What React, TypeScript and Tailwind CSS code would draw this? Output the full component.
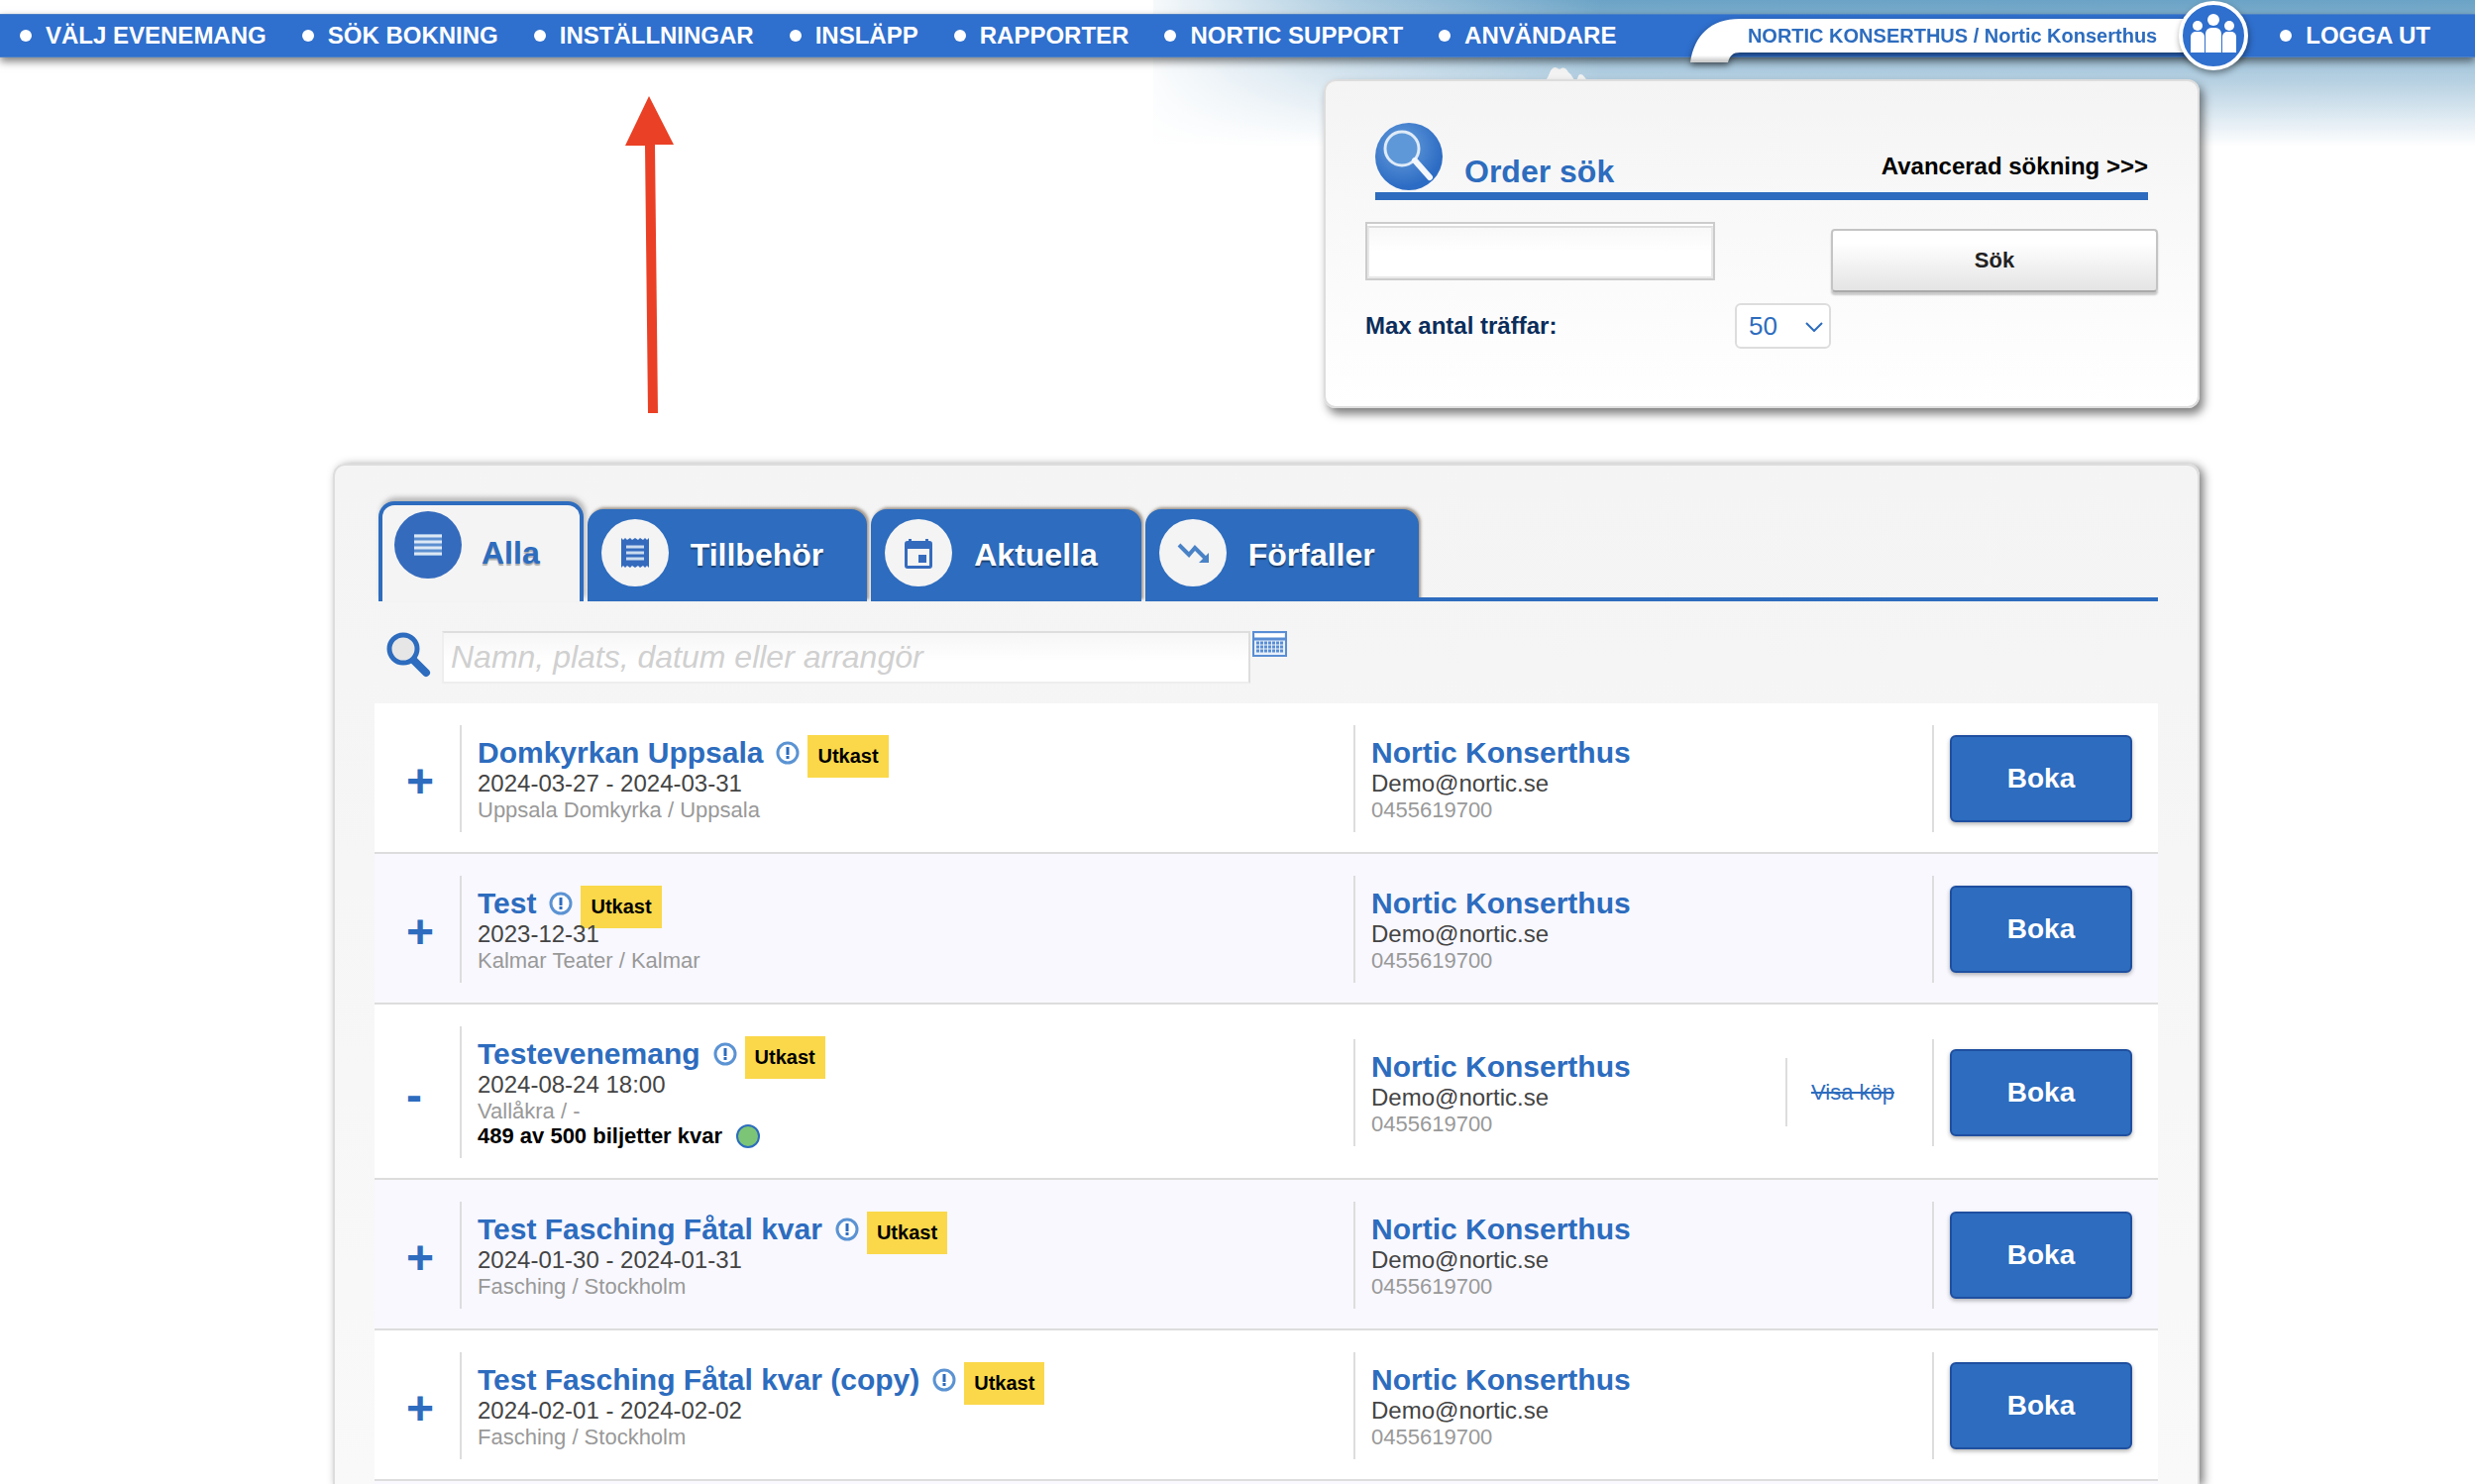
import { useState } from 'react'
import type { ReactNode } from 'react'

const menuItems = [
  'VÄLJ EVENEMANG',
  'SÖK BOKNING',
  'INSTÄLLNINGAR',
  'INSLÄPP',
  'RAPPORTER',
  'NORTIC SUPPORT',
  'ANVÄNDARE'
]

type EventRow = {
  title: string
  date: string
  venue: string
  tickets?: string
}

const events: EventRow[] = [
  { title: 'Domkyrkan Uppsala', date: '2024-03-27 - 2024-03-31', venue: 'Uppsala Domkyrka / Uppsala' },
  { title: 'Test', date: '2023-12-31', venue: 'Kalmar Teater / Kalmar' },
  {
    title: 'Testevenemang',
    date: '2024-08-24 18:00',
    venue: 'Vallåkra / -',
    tickets: '489 av 500 biljetter kvar'
  },
  { title: 'Test Fasching Fåtal kvar', date: '2024-01-30 - 2024-01-31', venue: 'Fasching / Stockholm' },
  { title: 'Test Fasching Fåtal kvar (copy)', date: '2024-02-01 - 2024-02-02', venue: 'Fasching / Stockholm' }
]

const ListIcon = () => (
  <svg viewBox="0 0 68 68" className="size-[68px]">
    <circle cx="34" cy="34" r="34" fill="#356bbd" />
    <rect x="20" y="23" width="28" height="22" fill="#5c8fd0" />
    <path d="M20 25h28M20 31h28M20 37h28M20 43h28" stroke="#dce8f5" strokeWidth="3" />
  </svg>
)

const ReceiptIcon = () => (
  <svg viewBox="0 0 68 68" className="size-[68px]">
    <circle cx="34" cy="34" r="34" fill="#f4f4f4" />
    <path
      d="M20 19l2 2 2-2 2 2 3-2 2 2 3-2 3 2 2-2 3 2 2-2 2 2 2-2v30l-2-2-2 2-2-2-3 2-2-2-3 2-3-2-2 2-3-2-2 2-2-2-2 2z"
      fill="#356bbd"
    />
    <path d="M25 28h18M25 34h18M25 40h18" stroke="#c9dbef" strokeWidth="3" />
  </svg>
)

const CalendarIcon = () => (
  <svg viewBox="0 0 68 68" className="size-[68px]">
    <circle cx="34" cy="34" r="34" fill="#f4f4f4" />
    <path
      d="M24 20h3v2h14v-2h3v2h1a3 3 0 0 1 3 3v22a3 3 0 0 1-3 3H23a3 3 0 0 1-3-3V25a3 3 0 0 1 3-3h1zM23 30v17h22V30z"
      fill="#356bbd"
      fillRule="evenodd"
    />
    <rect x="34" y="36" width="8" height="8" fill="#356bbd" />
  </svg>
)

const TrendIcon = () => (
  <svg viewBox="0 0 68 68" className="size-[68px]">
    <circle cx="34" cy="34" r="34" fill="#f4f4f4" />
    <path d="M20 26l10 10 6-7 10 10" fill="none" stroke="#4a82c6" strokeWidth="4" />
    <path d="M50 34v10H40z" fill="#4a82c6" />
  </svg>
)

const tabs: { label: string; icon: ReactNode }[] = [
  { label: 'Alla', icon: <ListIcon /> },
  { label: 'Tillbehör', icon: <ReceiptIcon /> },
  { label: 'Aktuella', icon: <CalendarIcon /> },
  { label: 'Förfaller', icon: <TrendIcon /> }
]

const MenuLink = ({ label }: { label: string }) => (
  <a href="#" className="flex items-center gap-[14px] text-2xl font-bold whitespace-nowrap text-white">
    <span className="size-3 rounded-full bg-white" />
    {label}
  </a>
)

const Sky = () => (
  <div className="absolute top-0 right-0 left-[1164px] h-[148px] bg-[linear-gradient(to_right,#fffffff0_0%,#ffffff70_15%,#ffffff00_34%),linear-gradient(to_bottom,#6ba3c6_0%,#9fc3da_34%,#b4cfe1_54%,#ffffff_100%)]">
    <svg viewBox="0 0 72 14" className="absolute top-[67px] left-[394px] h-[14px] w-[72px]">
      <path d="M2 14C6 10 6 2 11 1c3 0 4 3 7 1 4-2 6 3 8 5 2 1 3 4 5 7h2c2-2 1-5 4-6 3 0 4 3 7 6z" fill="#f3f3f3" />
    </svg>
  </div>
)

const OrganizationBadge = () => (
  <div className="flex h-11 items-center">
    {/* one shadow for the tail and the label, so no seam shows between them */}
    <div className="-mr-[35px] flex h-11 items-center drop-shadow-[0_3px_3px_rgba(0,0,0,0.5)]">
      <svg viewBox="0 0 50 52" className="h-[52px] w-[50px] self-start">
        <defs>
          <linearGradient id="tail" x1="0" y1="0" x2="0" y2="1">
            <stop offset="0.84" stopColor="#ffffff" />
            <stop offset="0.96" stopColor="#cfcfcf" />
          </linearGradient>
        </defs>
        <path d="M50 5C20 5 4 22 0 49h38c2-7 5-10 12-10z" fill="url(#tail)" />
      </svg>
      <a
        href="#"
        className="flex h-[34px] items-center bg-white pr-[57px] pl-2 text-xl font-bold whitespace-nowrap text-[#2d6cbe]"
      >
        NORTIC KONSERTHUS / Nortic Konserthus
      </a>
    </div>
    <svg viewBox="0 0 70 70" className="relative size-[70px] drop-shadow-[1px_3px_3px_rgba(0,0,0,0.4)]">
      <circle cx="35" cy="35" r="33" fill="#2f6fcd" stroke="#ffffff" strokeWidth="4" />
      <g fill="#ffffff">
        <circle cx="35" cy="19" r="6" />
        <circle cx="19" cy="25" r="5" />
        <circle cx="51" cy="25" r="5" />
        <path d="M27 52V33a6 6 0 0 1 6-6h4a6 6 0 0 1 6 6v19z" />
        <path d="M12 52V36a5 5 0 0 1 5-5h4a5 5 0 0 1 5 5v16z" />
        <path d="M44 52V36a5 5 0 0 1 5-5h4a5 5 0 0 1 5 5v16z" />
      </g>
    </svg>
  </div>
)

const Header = () => (
  <header className="relative pt-[14px]">
    <nav className="flex h-11 items-center gap-9 border-y border-[#4a80c8] bg-[#2f6fcd] pr-[45px] pl-5 shadow-[0_4px_8px_rgba(0,0,0,0.5)]">
      {menuItems.map((item) => (
        <MenuLink key={item} label={item} />
      ))}
      <div className="ml-auto flex items-center gap-8">
        <OrganizationBadge />
        <MenuLink label="LOGGA UT" />
      </div>
    </nav>
  </header>
)

const OrderSearch = () => (
  <form className="h-[332px] w-[884px] rounded-xl border-2 border-[#dddddd] bg-linear-to-b from-[#f4f4f4] to-white px-10 pt-[42px] shadow-[4px_6px_10px_rgba(0,0,0,0.5)]">
    <div className="mx-[10px] flex h-[78px] items-start border-b-8 border-[#2d6cbe]">
      <svg viewBox="0 0 68 68" className="size-[68px]">
        <defs>
          <radialGradient id="lens" cx="0.4" cy="0.35" r="0.6">
            <stop offset="0" stopColor="#69a0dc" />
            <stop offset="1" stopColor="#2d6cc4" />
          </radialGradient>
        </defs>
        <circle cx="34" cy="34" r="34" fill="url(#lens)" />
        <circle cx="27" cy="26" r="17" fill="#5e98d8" stroke="#dfebf8" strokeWidth="3" />
        <path d="M40 38l15 17" stroke="#f4f8fd" strokeWidth="6" strokeLinecap="round" />
      </svg>
      <h2 className="mt-[31px] ml-[22px] text-[32px] leading-9 font-bold text-[#2d6cbe]">Order sök</h2>
      <a href="#" className="mt-[30px] ml-auto text-2xl leading-7 font-bold text-black">
        Avancerad sökning &gt;&gt;&gt;
      </a>
    </div>
    <div className="mt-[22px] flex items-start justify-between">
      <div className="w-[353px] border-2 border-[#cccccc] bg-white pt-[2px]">
        <input
          type="text"
          aria-label="Order sök"
          className="block h-[53px] w-full border-2 border-[#e8e8e8] border-t-[#dddddd] bg-linear-to-b from-[#f8f8f8] to-white to-50% px-2 text-2xl outline-none"
        />
      </div>
      <button
        type="button"
        className="mt-[7px] h-16 w-[330px] rounded-sm border-2 border-[#c4c4c4] border-b-[#aaaaaa] bg-linear-to-b from-white from-20% to-[#e4e4e4] pb-[2px] text-[22px] font-bold text-[#222222] shadow-[0_3px_2px_rgba(0,0,0,0.2)]"
      >
        Sök
      </button>
    </div>
    <div className="mt-[11px] flex h-[46px] items-center">
      <label htmlFor="max-hits" className="w-[373px] text-2xl font-bold text-[#0b2d5b]">
        Max antal träffar:
      </label>
      <div className="relative">
        <select
          id="max-hits"
          className="h-[46px] w-[97px] appearance-none rounded-md border-2 border-[#dddddd] bg-white pl-3 text-[26px] leading-8 text-[#2d6cbe]"
        >
          <option>50</option>
          <option>100</option>
        </select>
        <svg viewBox="0 0 18 10" className="pointer-events-none absolute top-[19px] right-2 h-[10px] w-[18px]">
          <path d="M1 1l8 8 8-8" fill="none" stroke="#2d6cbe" strokeWidth="2" />
        </svg>
      </div>
    </div>
  </form>
)

const Tabs = () => {
  const [active, setActive] = useState('Alla')

  return (
    <div role="tablist" className="flex items-end pl-1">
      {tabs.map((tab) => (
        <button
          key={tab.label}
          type="button"
          role="tab"
          aria-selected={tab.label === active}
          onClick={() => setActive(tab.label)}
          className={
            tab.label === active
              ? 'flex h-[101px] items-start gap-5 rounded-t-2xl border-4 border-b-0 border-[#2d6cbe] bg-[#f4f4f4] pt-[6px] pr-10 pl-3 text-[32px] font-bold text-[#2d6cbe] shadow-[2px_-4px_5px_rgba(0,0,0,0.25)] text-shadow-[0_2px_1px_rgba(0,0,0,0.3)]'
              : 'ml-1 flex h-[93px] items-start gap-[22px] rounded-t-2xl bg-[#2d6cbe] pt-[10px] pr-11 pl-[14px] text-[32px] font-bold text-white shadow-[2px_-2px_3px_rgba(80,60,40,0.5)] text-shadow-[0_2px_1px_rgba(0,0,0,0.4)]'
          }
        >
          {tab.icon}
          <span className={tab.label === active ? 'mt-6 leading-9' : 'mt-[18px] leading-9'}>{tab.label}</span>
        </button>
      ))}
      <div className="h-1 flex-1 bg-[#2d6cbe]" />
    </div>
  )
}

const FilterBar = () => (
  <div className="flex items-start pt-[30px] pb-5 pl-[11px]">
    <svg viewBox="0 0 48 48" className="size-12">
      <circle cx="18" cy="18" r="14" fill="#e6e6e6" stroke="#2d6cbe" strokeWidth="5" />
      <path d="M29 30l12 12" stroke="#2d6cbe" strokeWidth="8" strokeLinecap="round" />
    </svg>
    <input
      type="text"
      aria-label="Sök evenemang"
      placeholder="Namn, plats, datum eller arrangör"
      className="ml-[9px] h-[53px] w-[816px] border-2 border-[#eeeeee] border-t-[#dddddd] border-r-[#dddddd] bg-linear-to-b from-[#f6f6f6] to-white to-60% px-[7px] text-[32px] outline-none placeholder:text-[#d0d0d0] placeholder:italic"
    />
    <button type="button" aria-label="Välj datum" className="ml-[2px]">
      <svg viewBox="0 0 35 26" className="h-[26px] w-[35px]">
        <rect x="1" y="1" width="33" height="24" fill="#e8f0fa" stroke="#5a8dd4" strokeWidth="2" />
        <rect x="3" y="3" width="29" height="4" fill="#ffffff" />
        <path d="M1 8h33" stroke="#5a8dd4" strokeWidth="3" />
        <path d="M4 12h27M4 16h27M4 20h27" stroke="#5a8dd4" strokeWidth="3" strokeDasharray="3 1" />
      </svg>
    </button>
  </div>
)

const InfoIcon = () => (
  <svg viewBox="0 0 24 24" className="size-6">
    <circle cx="12" cy="12" r="10" fill="#ffffff" stroke="#5b93d3" strokeWidth="3" />
    <path d="M12 6v8M12 15v3" stroke="#2d6cbe" strokeWidth="3" />
  </svg>
)

const EventTableRow = ({ event }: { event: EventRow }) => (
  <tr className="odd:bg-white even:bg-[#f8f8fe] [&>td]:border-b-2 [&>td]:border-[#dddddd] [&>td]:px-0 [&>td]:pt-[22px] [&>td]:pb-5">
    <td>
      <button
        type="button"
        aria-label={event.tickets ? 'Dölj' : 'Visa'}
        className="block pt-[6px] pl-8 text-5xl leading-[52px] font-bold text-[#2d6cbe]"
      >
        {event.tickets ? '-' : '+'}
      </button>
    </td>
    <td>
      <div className="border-l-2 border-[#dddddd] pt-[11px] pb-[10px] pl-4">
        <div className="flex h-[34px] items-start">
          <a href="#" className="text-[30px] leading-[34px] font-bold text-[#2d6cbe]">
            {event.title}
          </a>
          <span className="mt-[5px] mr-2 ml-[13px]">
            <InfoIcon />
          </span>
          <span className="-mt-px h-[43px] bg-[#fad84a] px-[10px] text-xl leading-[42px] font-bold text-black">
            Utkast
          </span>
        </div>
        <p className="relative text-2xl leading-7 text-[#444444]">{event.date}</p>
        <p className="text-[22px] leading-[25px] text-[#999999]">{event.venue}</p>
        {event.tickets && (
          <p className="flex items-center gap-[14px] text-[22px] leading-[25px] font-bold text-black">
            {event.tickets}
            <span className="size-6 rounded-full border-2 border-[#2d6cbe] bg-[#7cc576]" />
          </p>
        )}
      </div>
    </td>
    <td>
      <div className="border-l-2 border-[#dddddd] pt-[11px] pb-[10px] pl-4">
        <a href="#" className="block text-[30px] leading-[34px] font-bold text-[#2d6cbe]">
          Nortic Konserthus
        </a>
        <p className="text-2xl leading-7 text-[#444444]">Demo@nortic.se</p>
        <p className="text-[22px] leading-[25px] text-[#999999]">0455619700</p>
      </div>
    </td>
    <td>
      {event.tickets && (
        <div className="flex h-[69px] items-center border-l-2 border-[#dddddd] pl-6">
          <a href="#" className="text-[22px] text-[#2d6cbe] line-through">
            Visa köp
          </a>
        </div>
      )}
    </td>
    <td>
      <div className="border-l-2 border-[#dddddd] py-[10px] pl-4">
        <button
          type="button"
          className="block h-[88px] w-[184px] rounded-md border-2 border-[#1f4fa0] bg-[#2d6cbe] text-[28px] font-bold text-white shadow-[0_2px_4px_rgba(0,0,0,0.3)]"
        >
          Boka
        </button>
      </div>
    </td>
  </tr>
)

const Arrow = () => (
  <svg viewBox="0 0 50 320" className="absolute top-[97px] left-[631px] h-[320px] w-[50px]">
    <path d="M24 0l25 49H30l3 271H23L20 50H0z" fill="#ea4025" />
  </svg>
)

const App = () => {
  return (
    <div className="relative flex min-h-screen flex-col bg-white font-['Liberation_Sans',Arial,sans-serif]">
      <Sky />
      <Header />
      <Arrow />
      <main className="relative flex flex-1 flex-col pt-[22px] pr-[278px] pl-[336px]">
        <div className="flex justify-end">
          <OrderSearch />
        </div>
        <section className="mt-14 flex flex-1 flex-col rounded-t-xl border-2 border-b-0 border-[#dddddd] bg-linear-to-b from-[#f4f4f4] to-[#f9f9f9] px-10 pt-9 shadow-[4px_2px_10px_rgba(0,0,0,0.5)]">
          <Tabs />
          <FilterBar />
          <table className="w-full table-fixed border-separate border-spacing-0">
            <colgroup>
              <col className="w-[86px]" />
              <col />
              <col className="w-[436px]" />
              <col className="w-[148px]" />
              <col className="w-[228px]" />
            </colgroup>
            <tbody>
              {events.map((event) => (
                <EventTableRow key={event.title} event={event} />
              ))}
            </tbody>
          </table>
          <div className="flex-1 bg-[#f8f8fe]" />
        </section>
      </main>
    </div>
  )
}

export default App
